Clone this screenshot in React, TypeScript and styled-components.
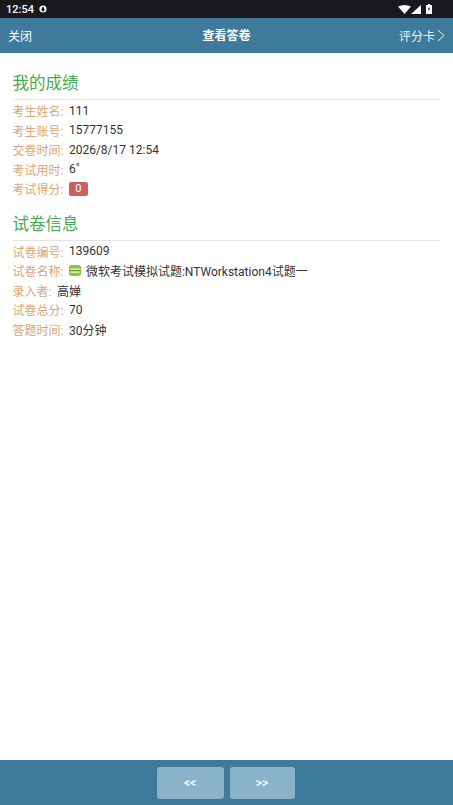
import React from "react";
import styled, { createGlobalStyle } from "styled-components";

const Global = createGlobalStyle`
  html, body { margin: 0; padding: 0; background: #fff; }
  body { font-family: Roboto, "Noto Sans CJK SC", sans-serif; }
`;

const Page = styled.div`
  width: 453px;
  height: 805px;
  display: flex;
  flex-direction: column;
  overflow: hidden;
`;

const StatusBar = styled.div`
  height: 18px;
  background: #18191d;
  color: #fff;
  display: flex;
  align-items: center;
  justify-content: space-between;
  padding: 0 6px;
  font-size: 11px;
  font-weight: 500;
  box-sizing: border-box;
`;

const StatusLeft = styled.div`
  display: flex;
  align-items: center;
  gap: 5px;
`;

const StatusRight = styled.div`
  display: flex;
  align-items: center;
  margin-right: 15px;
`;

const Header = styled.header`
  height: 35px;
  background: #3d7a9b;
  color: #fff;
  display: grid;
  grid-template-columns: 1fr auto 1fr;
  align-items: center;
  padding: 0 8px;
  font-size: 12px;
`;

const Title = styled.div`
  font-weight: 700;
  padding-bottom: 3px;
`;

const HeaderRight = styled.div`
  justify-self: end;
  display: flex;
  align-items: center;
  gap: 2px;
  color: #e6f4fa;
`;

const Content = styled.main`
  flex: 1;
  padding: 20px 12px 0 12.5px;
`;

const Section = styled.section`
  margin-bottom: 15px;
`;

const SectionTitle = styled.h2`
  margin: 0 0 1px;
  padding-bottom: 5px;
  border-bottom: 1px solid #e2e4e6;
  color: #4aa755;
  font-size: 16.5px;
  line-height: 21px;
  font-weight: 400;
`;

const Row = styled.div`
  height: 19.5px;
  display: flex;
  align-items: center;
  font-size: 12px;
  color: #333;
`;

const Label = styled.span`
  color: #d9a673;
  margin-right: 5.5px;
`;

const Badge = styled.span`
  background: #c9605f;
  color: #fff;
  border-radius: 2px;
  width: 19px;
  height: 14px;
  display: inline-flex;
  align-items: center;
  justify-content: center;
  font-size: 11px;
`;

const PaperIcon = styled.svg`
  width: 12px;
  height: 11px;
  margin-right: 5px;
`;

const Footer = styled.footer`
  height: 45px;
  background: #3d7a9b;
  display: flex;
  align-items: center;
  justify-content: center;
  gap: 6px;
  padding-right: 2px;
`;

const NavButton = styled.button<{ $w: number }>`
  width: ${(p) => p.$w}px;
  height: 32px;
  border: none;
  border-radius: 3px;
  background: #8ab3c9;
  color: #fff;
  font-family: inherit;
  font-size: 12px;
  font-weight: 500;
  padding: 0;
`;

const Fields1: [string, React.ReactNode][] = [
  ["考生姓名:", "111"],
  ["考生账号:", "15777155"],
  ["交卷时间:", "2026/8/17 12:54"],
  ["考试用时:", '6"'],
  ["考试得分:", <Badge>0</Badge>],
];

const Fields2: [string, React.ReactNode][] = [
  ["试卷编号:", "139609"],
  [
    "试卷名称:",
    <>
      <PaperIcon viewBox="0 0 12 11">
        <rect width="12" height="11" rx="2.5" fill="#8bc34a" />
        <rect x="1.5" y="3.5" width="9" height="1.6" fill="#e8efb0" />
        <rect x="1.5" y="5.1" width="9" height="1.2" fill="#5f8f2f" />
        <rect x="1.5" y="6.3" width="9" height="1.6" fill="#e8efb0" />
      </PaperIcon>
      微软考试模拟试题:NTWorkstation4试题一
    </>,
  ],
  ["录入者:", "高婵"],
  ["试卷总分:", "70"],
  ["答题时间:", "30分钟"],
];

export default function App() {
  return (
    <Page>
      <Global />
      <StatusBar>
        <StatusLeft>
          12:54
          <svg width="8" height="8" viewBox="0 0 10 10">
            <circle cx="5" cy="5" r="4.5" fill="#fff" />
            <path d="M5 2 C6.5 4 7 5 7 6 A2 2 0 0 1 3 6 C3 5 3.5 4 5 2Z" fill="#18191d" />
          </svg>
        </StatusLeft>
        <StatusRight>
          <svg width="13" height="9" viewBox="0 0 13 9">
            <path d="M0 1.5 Q6.5 -1.5 13 1.5 L6.5 9Z" fill="#fff" />
          </svg>
          <svg width="10" height="9" viewBox="0 0 10 9">
            <path d="M10 0 V9 H0Z" fill="#fff" />
          </svg>
          <svg width="6" height="10" viewBox="0 0 6 10" style={{ marginLeft: 5 }}>
            <path d="M2 0h2v1h2v9H0V1h2z" fill="#fff" />
            <path d="M3.4 2.2 1.8 5.2h1l-.4 2.4L4.2 4.4H3.1z" fill="#18191d" />
          </svg>
        </StatusRight>
      </StatusBar>
      <Header>
        <div>关闭</div>
        <Title>查看答卷</Title>
        <HeaderRight>
          评分卡
          <svg width="8" height="13" viewBox="0 0 8 13">
            <path d="M1 1 L7 6.5 L1 12" fill="none" stroke="#e6f4fa" strokeWidth="1" />
          </svg>
        </HeaderRight>
      </Header>
      <Content>
        <Section>
          <SectionTitle>我的成绩</SectionTitle>
          {Fields1.map(([l, v]) => (
            <Row key={l}>
              <Label>{l}</Label>
              {v}
            </Row>
          ))}
        </Section>
        <Section>
          <SectionTitle>试卷信息</SectionTitle>
          {Fields2.map(([l, v]) => (
            <Row key={l}>
              <Label>{l}</Label>
              {v}
            </Row>
          ))}
        </Section>
      </Content>
      <Footer>
        <NavButton $w={67}>&lt;&lt;</NavButton>
        <NavButton $w={65}>&gt;&gt;</NavButton>
      </Footer>
    </Page>
  );
}
